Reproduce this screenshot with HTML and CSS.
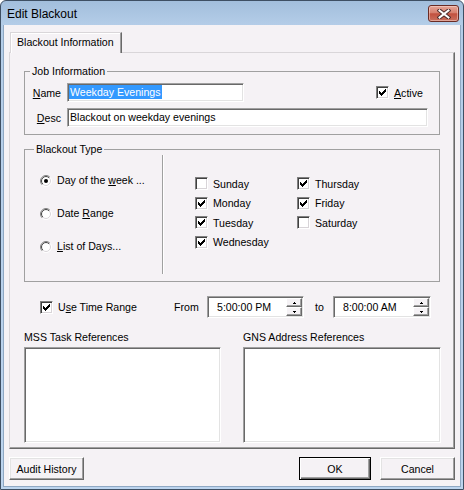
FILE: index.html
```html
<!DOCTYPE html>
<html>
<head>
<meta charset="utf-8">
<title>Edit Blackout</title>
<link rel="stylesheet" href="styles.css">
</head>
<body>
<div class="window">
  <div class="titlebar">
    <span class="title">Edit Blackout</span>
    <span class="close">
      <svg width="14" height="10" viewBox="0 0 14 10">
        <path d="M2.5 1.5 L11.5 8.5 M11.5 1.5 L2.5 8.5" stroke="#4a2a2a" stroke-width="4" stroke-linecap="square" fill="none"/>
        <path d="M2.5 1.5 L11.5 8.5 M11.5 1.5 L2.5 8.5" stroke="#ffffff" stroke-width="2" stroke-linecap="square" fill="none"/>
      </svg>
    </span>
  </div>
  <div class="client">
    <div class="tabstrip"><div class="tab">Blackout Information</div></div>
    <div class="panel">
      <fieldset class="group job">
        <legend>Job Information</legend>
        <div class="frow">
          <span class="flabel"><u>N</u>ame</span>
          <span class="textbox name"><span class="selected">Weekday Evenings</span></span>
          <span class="check active-check">
            <span class="cb"><svg width="7" height="7" viewBox="0 0 7 7"><path d="M0 2h1v3H0z M1 3h1v3H1z M2 4h1v3H2z M3 3h1v3H3z M4 2h1v3H4z M5 1h1v3H5z M6 0h1v3H6z" fill="#000"/></svg></span>
            <span><u>A</u>ctive</span>
          </span>
        </div>
        <div class="frow second">
          <span class="flabel"><u>D</u>esc</span>
          <span class="textbox desc">Blackout on weekday evenings</span>
        </div>
      </fieldset>

      <fieldset class="group type">
        <legend>Blackout Type</legend>
        <div class="typebody">
          <div class="radios">
            <div class="radio">
              <svg class="rb" width="12" height="12" viewBox="0 0 12 12">
                <defs>
                  <linearGradient id="ro" x1="0" y1="0" x2="1" y2="1"><stop offset="0.45" stop-color="#808080"/><stop offset="0.55" stop-color="#ffffff"/></linearGradient>
                  <linearGradient id="ri" x1="0" y1="0" x2="1" y2="1"><stop offset="0.45" stop-color="#404040"/><stop offset="0.55" stop-color="#d8d4d8"/></linearGradient>
                </defs>
                <circle cx="6" cy="6" r="5.5" fill="#fff" stroke="url(#ro)" stroke-width="1"/>
                <circle cx="6" cy="6" r="4.5" fill="#fff" stroke="url(#ri)" stroke-width="1"/>
                <circle cx="6" cy="6" r="2" fill="#000"/>
              </svg>
              <span>Day of the <u>w</u>eek ...</span>
            </div>
            <div class="radio">
              <svg class="rb" width="12" height="12" viewBox="0 0 12 12">
                <circle cx="6" cy="6" r="5.5" fill="#fff" stroke="url(#ro)" stroke-width="1"/>
                <circle cx="6" cy="6" r="4.5" fill="#fff" stroke="url(#ri)" stroke-width="1"/>
              </svg>
              <span>Date <u>R</u>ange</span>
            </div>
            <div class="radio">
              <svg class="rb" width="12" height="12" viewBox="0 0 12 12">
                <circle cx="6" cy="6" r="5.5" fill="#fff" stroke="url(#ro)" stroke-width="1"/>
                <circle cx="6" cy="6" r="4.5" fill="#fff" stroke="url(#ri)" stroke-width="1"/>
              </svg>
              <span><u>L</u>ist of Days...</span>
            </div>
          </div>
          <div class="divider"></div>
          <div class="days">
            <span class="check"><span class="cb"></span><span>Sunday</span></span>
            <span class="check"><span class="cb"><svg width="7" height="7" viewBox="0 0 7 7"><path d="M0 2h1v3H0z M1 3h1v3H1z M2 4h1v3H2z M3 3h1v3H3z M4 2h1v3H4z M5 1h1v3H5z M6 0h1v3H6z" fill="#000"/></svg></span><span>Monday</span></span>
            <span class="check"><span class="cb"><svg width="7" height="7" viewBox="0 0 7 7"><path d="M0 2h1v3H0z M1 3h1v3H1z M2 4h1v3H2z M3 3h1v3H3z M4 2h1v3H4z M5 1h1v3H5z M6 0h1v3H6z" fill="#000"/></svg></span><span>Tuesday</span></span>
            <span class="check"><span class="cb"><svg width="7" height="7" viewBox="0 0 7 7"><path d="M0 2h1v3H0z M1 3h1v3H1z M2 4h1v3H2z M3 3h1v3H3z M4 2h1v3H4z M5 1h1v3H5z M6 0h1v3H6z" fill="#000"/></svg></span><span>Wednesday</span></span>
            <span class="check"><span class="cb"><svg width="7" height="7" viewBox="0 0 7 7"><path d="M0 2h1v3H0z M1 3h1v3H1z M2 4h1v3H2z M3 3h1v3H3z M4 2h1v3H4z M5 1h1v3H5z M6 0h1v3H6z" fill="#000"/></svg></span><span>Thursday</span></span>
            <span class="check"><span class="cb"><svg width="7" height="7" viewBox="0 0 7 7"><path d="M0 2h1v3H0z M1 3h1v3H1z M2 4h1v3H2z M3 3h1v3H3z M4 2h1v3H4z M5 1h1v3H5z M6 0h1v3H6z" fill="#000"/></svg></span><span>Friday</span></span>
            <span class="check"><span class="cb"></span><span>Saturday</span></span>
          </div>
        </div>
      </fieldset>

      <div class="timerow">
        <span class="check userange"><span class="cb"><svg width="7" height="7" viewBox="0 0 7 7"><path d="M0 2h1v3H0z M1 3h1v3H1z M2 4h1v3H2z M3 3h1v3H3z M4 2h1v3H4z M5 1h1v3H5z M6 0h1v3H6z" fill="#000"/></svg></span><span>U<u>s</u>e Time Range</span></span>
        <span class="from">From</span>
        <span class="spin s1">
          <span class="spintext">5:00:00 PM</span>
          <span class="spinbtns">
            <span class="sbtn"><svg width="3" height="2" viewBox="0 0 3 2"><path d="M1 0h1v1H1z M0 1h3v1H0z" fill="#000"/></svg></span>
            <span class="sbtn"><svg width="3" height="2" viewBox="0 0 3 2"><path d="M0 0h3v1H0z M1 1h1v1H1z" fill="#000"/></svg></span>
          </span>
        </span>
        <span class="to">to</span>
        <span class="spin s2">
          <span class="spintext">8:00:00 AM</span>
          <span class="spinbtns">
            <span class="sbtn"><svg width="3" height="2" viewBox="0 0 3 2"><path d="M1 0h1v1H1z M0 1h3v1H0z" fill="#000"/></svg></span>
            <span class="sbtn"><svg width="3" height="2" viewBox="0 0 3 2"><path d="M0 0h3v1H0z M1 1h1v1H1z" fill="#000"/></svg></span>
          </span>
        </span>
      </div>

      <div class="refs">
        <div class="ref mss">
          <div class="reflabel">MSS Task References</div>
          <div class="listbox"></div>
        </div>
        <div class="ref gns">
          <div class="reflabel">GNS Address References</div>
          <div class="listbox"></div>
        </div>
      </div>
    </div>
    <div class="btnrow">
      <span class="btn audit">Audit History</span>
      <span class="btn ok">OK</span>
      <span class="btn cancel">Cancel</span>
    </div>
  </div>
</div>
</body>
</html>
```

FILE: styles.css
```css
html, body {
  margin: 0;
  padding: 0;
}
body {
  width: 464px;
  height: 490px;
  overflow: hidden;
  font-family: "Liberation Sans", Arial, sans-serif;
  font-size: 10.6px;
  color: #000;
  background: #fff;
}
.window {
  box-sizing: border-box;
  width: 464px;
  height: 490px;
  border: 1px solid #3e4f63;
  border-radius: 6px 6px 0 0;
  background: linear-gradient(#a2bedc, #b4cde8 24px, #bcd4ee);
  padding: 0 2px 2px;
  display: flex;
  flex-direction: column;
}
.titlebar {
  height: 24px;
  flex: none;
  display: flex;
  align-items: flex-start;
  padding: 0 2px 0 4px;
}
.title {
  flex: 1;
  font-size: 12px;
  line-height: 24px;
  padding-top: 1px;
  color: #000;
}
.close {
  box-sizing: border-box;
  width: 31px;
  height: 17px;
  margin-top: 4px;
  border: 1px solid #6a2b24;
  border-radius: 3px;
  background: linear-gradient(#e6a597 0%, #d6806f 45%, #c2513f 52%, #c9705f 100%);
  box-shadow: inset 0 0 0 1px rgba(255, 230, 225, 0.45);
  display: flex;
  align-items: center;
  justify-content: center;
}
.client {
  flex: 1;
  box-sizing: border-box;
  border: 1px solid #8fa8c3;
  border-top: none;
  background: #f5f2f5;
  padding: 7px 5px 6px;
  display: flex;
  flex-direction: column;
}
.tabstrip {
  height: 20px;
  display: flex;
  padding-left: 1px;
}
.tab {
  position: relative;
  z-index: 1;
  box-sizing: border-box;
  width: 112px;
  height: 21px;
  background: #f5f2f5;
  border-top: 1px solid #d9d6d9;
  border-left: 1px solid #d9d6d9;
  border-right: 1px solid #696969;
  box-shadow: inset -1px 0 #a0a0a0, inset 1px 1px #ffffff;
  padding: 3px 0 0 6px;
  line-height: 13px;
  white-space: nowrap;
}
.panel {
  box-sizing: border-box;
  width: 446px;
  height: 397px;
  border-top: 1px solid #d9d6d9;
  border-left: 1px solid #d9d6d9;
  border-right: 1px solid #696969;
  border-bottom: 1px solid #696969;
  box-shadow: inset -1px -1px #a0a0a0;
  padding-left: 14px;
}
.group {
  margin: 0;
  padding: 0;
  min-width: 0;
  width: 416px;
  box-sizing: border-box;
  border: 1px solid #a0a0a0;
}
.group legend {
  padding: 0 2px;
  height: 13px;
  line-height: 13px;
}
.job {
  margin-top: 12px;
  padding: 5px 0 7px;
}
.job legend {
  margin-left: 5px;
}
.frow {
  display: flex;
  align-items: center;
  height: 19px;
}
.frow.second {
  margin-top: 6px;
}
.flabel {
  width: 36px;
  text-align: right;
}
.textbox {
  box-sizing: border-box;
  height: 19px;
  margin-left: 6px;
  background: #fff;
  border: 1px solid;
  border-color: #a0a0a0 #ffffff #ffffff #a0a0a0;
  box-shadow: inset 1px 1px #696969, inset -1px -1px #e3e3e3;
  padding: 1px 0 0 1px;
  line-height: 15px;
  white-space: nowrap;
  overflow: hidden;
}
.textbox.name {
  width: 177px;
}
.textbox.desc {
  width: 361px;
  padding-left: 2px;
}
.selected {
  display: inline-block;
  background: #3399ff;
  color: #fff;
  line-height: 14px;
  padding: 0 1px;
}
.check {
  display: flex;
  align-items: center;
  white-space: nowrap;
}
.cb {
  box-sizing: border-box;
  width: 13px;
  height: 13px;
  flex: none;
  background: #fff;
  border: 1px solid;
  border-color: #808080 #ffffff #ffffff #808080;
  box-shadow: inset 1px 1px #404040, inset -1px -1px #d8d4d8;
  display: flex;
  align-items: center;
  justify-content: center;
  margin-right: 5px;
}
.active-check {
  margin-left: 132px;
}
.type {
  margin-top: 8px;
  padding: 0;
}
.type legend {
  margin-left: 9px;
}
.typebody {
  display: flex;
  height: 125px;
}
.radios {
  width: 137px;
  flex: none;
  padding: 18px 0 0 15px;
  box-sizing: border-box;
  display: flex;
  flex-direction: column;
  gap: 20px;
}
.radio {
  display: flex;
  align-items: center;
  height: 13px;
  line-height: 13px;
  white-space: nowrap;
}
.rb {
  flex: none;
  margin-right: 5px;
}
.divider {
  width: 0;
  border-left: 1px solid #a0a0a0;
  border-right: 1px solid #ffffff;
  margin-bottom: 7px;
  margin-top: -1px;
}
.days {
  padding: 18px 0 0 31px;
  display: grid;
  grid-template-columns: 102px 102px;
  grid-template-rows: repeat(4, 19.5px);
  grid-auto-flow: column;
  align-items: center;
}
.timerow {
  margin-top: 14px;
  height: 22px;
  display: flex;
  align-items: center;
  padding-left: 16px;
}
.userange {
  width: 134px;
}
.from {
  width: 33px;
}
.spin {
  box-sizing: border-box;
  height: 22px;
  display: flex;
  background: #fff;
  border: 1px solid;
  border-color: #a0a0a0 #ffffff #ffffff #a0a0a0;
  box-shadow: inset 1px 1px #696969, inset -1px -1px #e3e3e3;
  padding: 1px;
}
.spin.s1 {
  width: 97px;
}
.spin.s2 {
  width: 98px;
}
.spintext {
  flex: 1;
  line-height: 18px;
  padding-left: 8px;
}
.spinbtns {
  width: 16px;
  display: flex;
  flex-direction: column;
}
.sbtn {
  flex: 1;
  box-sizing: border-box;
  background: #f5f2f5;
  border: 1px solid;
  border-color: #ffffff #696969 #696969 #ffffff;
  box-shadow: inset -1px -1px #a0a0a0;
  display: flex;
  align-items: center;
  justify-content: center;
}
.to {
  margin-left: 11px;
  width: 18px;
}
.refs {
  display: flex;
  gap: 22px;
  margin-top: 13px;
}
.ref.mss {
  width: 197px;
}
.ref.gns {
  width: 198px;
}
.reflabel {
  height: 13px;
  line-height: 13px;
  white-space: nowrap;
}
.listbox {
  box-sizing: border-box;
  margin-top: 3px;
  height: 96px;
  background: #fff;
  border: 1px solid;
  border-color: #a0a0a0 #ffffff #ffffff #a0a0a0;
  box-shadow: inset 1px 1px #696969, inset -1px -1px #e3e3e3;
}
.btnrow {
  margin-top: 8px;
  display: flex;
  height: 23px;
}
.btn {
  box-sizing: border-box;
  height: 23px;
  display: flex;
  align-items: center;
  justify-content: center;
  background: #f5f2f5;
  border: 1px solid;
  border-color: #ffffff #696969 #696969 #ffffff;
  box-shadow: inset -1px -1px #a0a0a0, inset 1px 1px #e3e3e3;
  white-space: nowrap;
}
.btn.audit {
  width: 75px;
  margin-right: auto;
}
.btn.ok {
  width: 72px;
  margin-right: 9px;
  border-color: #000;
  box-shadow: inset 1px 1px #ffffff, inset -1px -1px #696969, inset -2px -2px #a0a0a0;
}
.btn.cancel {
  width: 75px;
}
```
